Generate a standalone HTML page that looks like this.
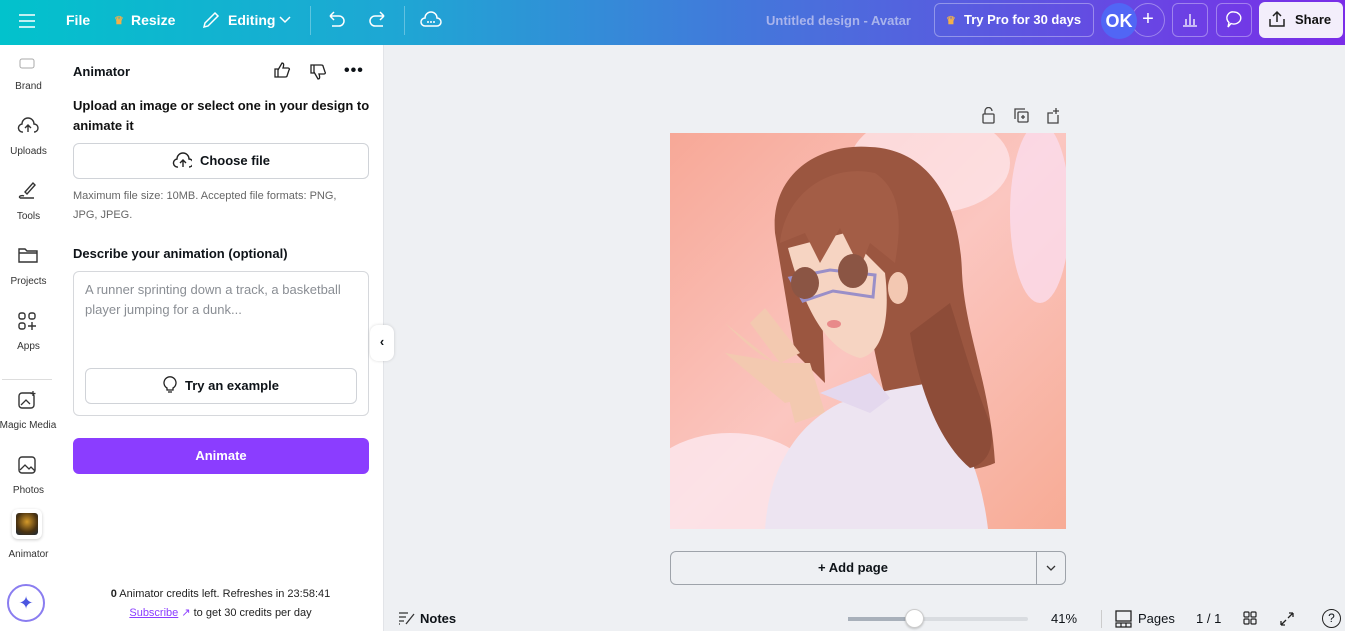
<!DOCTYPE html>
<html><head><meta charset="utf-8"><style>
*{box-sizing:border-box;margin:0;padding:0}
body{width:1345px;height:631px;overflow:hidden;font-family:"Liberation Sans",sans-serif;background:#eef0f3;position:relative;color:#0e1318}
.top{position:absolute;left:0;top:0;width:1345px;height:45px;background:linear-gradient(90deg,#02c2cc 0%,#1fa6d4 30%,#4a6fdc 60%,#7a2de8 100%)}
.t{position:absolute;color:#fff;font-weight:bold;font-size:14px;top:12px}
.abs{position:absolute}
.side{position:absolute;left:0;top:45px;width:57px;height:586px;background:#fff}
.sl{position:absolute;width:57px;text-align:center;font-size:10px;color:#333}
.panel{position:absolute;left:57px;top:45px;width:327px;height:586px;background:#fff;border-right:1px solid #e2e4e8}
.btn{position:absolute;border:1px solid #d0d3d8;border-radius:6px;background:#fff;font-weight:bold;font-size:13px;text-align:center}
</style></head><body>
<div class="top">
 <svg class="abs" style="left:18px;top:13px" width="18" height="16"><path d="M1 2h16M1 8h16M1 14h16" stroke="#fff" stroke-width="1.6"/></svg>
 <div class="t" style="left:66px">File</div>
 <div class="t" style="left:114px;color:#f3b04a;font-size:11px;top:14px">♛</div>
 <div class="t" style="left:131px">Resize</div>
 <svg class="abs" style="left:202px;top:11px" width="18" height="18"><path d="M2 16l1-4L13 2l3 3L6 15z" fill="none" stroke="#fff" stroke-width="1.5"/></svg>
 <div class="t" style="left:228px">Editing</div>
 <svg class="abs" style="left:279px;top:16px" width="12" height="8"><path d="M1 1l5 5 5-5" fill="none" stroke="#fff" stroke-width="1.5"/></svg>
 <div class="abs" style="left:310px;top:6px;width:1px;height:29px;background:rgba(255,255,255,.3)"></div>
 <svg class="abs" style="left:326px;top:11px" width="20" height="18"><path d="M4 5h9a5 5 0 0 1 0 10H6M4 5l4-4M4 5l4 4" fill="none" stroke="#fff" stroke-width="1.5"/></svg>
 <svg class="abs" style="left:368px;top:11px" width="20" height="18"><path d="M16 5H7a5 5 0 0 0 0 10h8M16 5l-4-4M16 5l-4 4" fill="none" stroke="#fff" stroke-width="1.5"/></svg>
 <div class="abs" style="left:404px;top:6px;width:1px;height:29px;background:rgba(255,255,255,.3)"></div>
 <svg class="abs" style="left:420px;top:9px" width="22" height="20"><path d="M5 17a4 4 0 0 1 0-8 6 6 0 0 1 12 0 4 4 0 0 1 0 8z" fill="none" stroke="#fff" stroke-width="1.5"/><circle cx="8" cy="13" r="1" fill="#fff"/><circle cx="11" cy="13" r="1" fill="#fff"/><circle cx="14" cy="13" r="1" fill="#fff"/></svg>
 <div class="t" style="left:766px;color:#a9b4ec;font-weight:bold;top:13px;font-size:13px">Untitled design - Avatar</div>
 <div class="abs" style="left:934px;top:3px;width:160px;height:34px;border:1px solid rgba(255,255,255,.35);border-radius:6px"></div>
 <div class="t" style="left:946px;color:#f3b04a;font-size:11px;top:14px">♛</div>
 <div class="t" style="left:964px;font-size:13px">Try Pro for 30 days</div>
 <div class="abs" style="left:1131px;top:3px;width:34px;height:34px;border:1px solid rgba(255,255,255,.35);border-radius:50%;color:#fff;font-size:20px;text-align:center;line-height:30px">+</div>
 <div class="abs" style="left:1101px;top:3px;width:36px;height:36px;background:#5166f5;border-radius:50%;color:#fff;font-size:18px;font-weight:bold;text-align:center;line-height:36px">OK</div>
 <div class="abs" style="left:1172px;top:3px;width:36px;height:34px;border:1px solid rgba(255,255,255,.35);border-radius:6px"></div>
 <svg class="abs" style="left:1182px;top:11px" width="16" height="16"><path d="M1 15h14M4 14V8M8 14V3M12 14V8" stroke="#fff" stroke-width="1.3"/></svg>
 <div class="abs" style="left:1216px;top:3px;width:36px;height:34px;border:1px solid rgba(255,255,255,.35);border-radius:6px"></div>
 <svg class="abs" style="left:1224px;top:10px" width="20" height="20"><path d="M10 2a7 6 0 1 1-3 11.5L4 17l1-4.5A6 6 0 0 1 10 2z" fill="none" stroke="#fff" stroke-width="1.4"/></svg>
 <div class="abs" style="left:1259px;top:2px;width:84px;height:36px;background:#f3eefb;border-radius:6px"></div>
 <svg class="abs" style="left:1268px;top:10px" width="18" height="18"><path d="M9 12V2M5 6l4-4 4 4M2 9v7h14V9" fill="none" stroke="#222" stroke-width="1.5"/></svg>
 <div class="abs" style="left:1295px;top:12px;font-weight:bold;font-size:13px;color:#111">Share</div>
</div>
<div class="side">
 <svg class="abs" style="left:19px;top:12px" width="16" height="12"><rect x="1" y="2" width="14" height="9" rx="2" fill="none" stroke="#aaa"/></svg>
 <div class="sl" style="top:36px">Brand</div>
 <svg class="abs" style="left:17px;top:71px" width="22" height="18"><path d="M6 16a4 4 0 0 1-1-8 6 6 0 0 1 12 0 4 4 0 0 1 0 8M11 16V9M8 12l3-3 3 3" fill="none" stroke="#333" stroke-width="1.4"/></svg>
 <div class="sl" style="top:101px">Uploads</div>
 <svg class="abs" style="left:17px;top:135px" width="22" height="20"><path d="M8 12l8-9 2 2-8 9zM3 18h14M3 18c-2-2 2-3 4-2" fill="none" stroke="#333" stroke-width="1.4"/></svg>
 <div class="sl" style="top:166px">Tools</div>
 <svg class="abs" style="left:18px;top:202px" width="20" height="16"><path d="M1 2h6l2 2h10v11H1z M1 6h18" fill="none" stroke="#333" stroke-width="1.4"/></svg>
 <div class="sl" style="top:231px">Projects</div>
 <svg class="abs" style="left:18px;top:267px" width="20" height="20"><rect x="1" y="1" width="6" height="6" rx="2" fill="none" stroke="#333" stroke-width="1.4"/><rect x="11" y="1" width="6" height="6" rx="2" fill="none" stroke="#333" stroke-width="1.4"/><rect x="1" y="11" width="6" height="6" rx="2" fill="none" stroke="#333" stroke-width="1.4"/><path d="M14 10v8M10 14h8" stroke="#333" stroke-width="1.4"/></svg>
 <div class="sl" style="top:296px">Apps</div>
 <div class="abs" style="left:2px;top:334px;width:50px;height:1px;background:#ddd"></div>
 <svg class="abs" style="left:18px;top:345px" width="20" height="20"><rect x="1" y="3" width="15" height="15" rx="3" fill="none" stroke="#333" stroke-width="1.4"/><path d="M3 15l5-5 4 4M15 1v5M12.5 3.5h5" stroke="#333" stroke-width="1.3" fill="none"/></svg>
 <div class="sl" style="top:375px;width:60px;left:-2px">Magic Media</div>
 <svg class="abs" style="left:18px;top:411px" width="20" height="20"><rect x="1" y="1" width="16" height="16" rx="3" fill="none" stroke="#333" stroke-width="1.4"/><path d="M2 14l5-5 4 4 2-2 4 4" stroke="#333" stroke-width="1.3" fill="none"/></svg>
 <div class="sl" style="top:440px">Photos</div>
 <div class="abs" style="left:12px;top:464px;width:30px;height:30px;border-radius:6px;background:#fff;box-shadow:0 1px 3px rgba(0,0,0,.2)"><div style="margin:4px;width:22px;height:22px;border-radius:3px;background:radial-gradient(circle at 50% 40%,#d59a2a,#4a3210 60%,#1c2a3a)"></div></div>
 <div class="sl" style="top:504px">Animator</div>
 <div class="abs" style="left:7px;top:539px;width:38px;height:38px;border-radius:50%;border:2px solid #8a7df0;background:#fff;text-align:center;line-height:34px;color:#4b56e0;font-size:18px">✦</div>
</div>
<div class="panel">
 <div class="abs" style="left:16px;top:19px;font-weight:bold;font-size:13px">Animator</div>
 <svg class="abs" style="left:216px;top:16px" width="18" height="18"><path d="M2 8h3v8H2zM5 9l4-7c2 0 2 2 1 5h5c1 0 2 1 1 2l-2 6c0 1-1 1-2 1H5" fill="none" stroke="#222" stroke-width="1.3"/></svg>
 <svg class="abs" style="left:252px;top:19px" width="18" height="18"><path d="M2 1h3v8H2zM5 8l4 7c2 0 2-2 1-5h5c1 0 2-1 1-2l-2-6c0-1-1-1-2-1H5" fill="none" stroke="#222" stroke-width="1.3"/></svg>
 <div class="abs" style="left:287px;top:17px;font-size:16px;font-weight:bold;letter-spacing:1px">•••</div>
 <div class="abs" style="left:16px;top:51px;font-size:13px;font-weight:bold;line-height:20px;width:300px;color:#111">Upload an image or select one in your design to animate it</div>
 <div class="btn" style="left:16px;top:98px;width:296px;height:36px;line-height:34px"><svg style="vertical-align:-4px;margin-right:8px" width="20" height="18"><path d="M6 16a4 4 0 0 1-1-8 6 6 0 0 1 12 0 4 4 0 0 1 0 8M11 16V9M8 12l3-3 3 3" fill="none" stroke="#222" stroke-width="1.4"/></svg>Choose file</div>
 <div class="abs" style="left:16px;top:142px;font-size:11px;line-height:19px;color:#666;width:290px">Maximum file size: 10MB. Accepted file formats: PNG, JPG, JPEG.</div>
 <div class="abs" style="left:16px;top:201px;font-size:13px;font-weight:bold">Describe your animation (optional)</div>
 <div class="abs" style="left:16px;top:226px;width:296px;height:145px;border:1px solid #d6d8dc;border-radius:6px"></div>
 <div class="abs" style="left:28px;top:235px;font-size:13px;line-height:20px;color:#8a8e94;width:280px">A runner sprinting down a track, a basketball player jumping for a dunk...</div>
 <div class="btn" style="left:28px;top:323px;width:272px;height:36px;line-height:34px;font-size:13px"><svg style="vertical-align:-4px;margin-right:8px" width="14" height="18"><path d="M4 12a6 6 0 1 1 6 0v2H4zM5 16h4" fill="none" stroke="#222" stroke-width="1.3"/></svg>Try an example</div>
 <div class="abs" style="left:16px;top:393px;width:296px;height:36px;border-radius:6px;background:#8b3dff;color:#fff;font-weight:bold;font-size:13px;text-align:center;line-height:36px">Animate</div>
 <div class="abs" style="left:0;top:543px;width:327px;text-align:center;font-size:11px;color:#222"><b>0</b> Animator credits left. Refreshes in 23:58:41</div>
 <div class="abs" style="left:0;top:561px;width:327px;text-align:center;font-size:11px;color:#222"><span style="color:#8b3dff;text-decoration:underline">Subscribe</span> <span style="color:#8b3dff">↗</span> to get 30 credits per day</div>
</div>
<div class="abs" style="left:370px;top:325px;width:24px;height:36px;background:#fff;border-radius:8px;box-shadow:0 0 3px rgba(0,0,0,.15);text-align:center;line-height:34px;font-size:13px;font-weight:bold">‹</div>
<svg class="abs" style="left:981px;top:107px" width="82" height="18"><g fill="none" stroke="#444" stroke-width="1.3"><rect x="2" y="7" width="11" height="9" rx="1"/><path d="M4 7V4a3.5 3.5 0 0 1 7 0"/><rect x="37" y="5" width="10" height="10" rx="1"/><path d="M34 12V2h10M42 8v4M40 10h4"/><path d="M77 8v8H67V6h5M75 1v6M72 4h6"/></g></svg>
<svg class="abs" style="left:670px;top:133px" width="396" height="396" viewBox="0 0 396 396">
 <defs><linearGradient id="bg" x1="0" y1="0" x2="1" y2="1"><stop offset="0" stop-color="#f7a897"/><stop offset=".5" stop-color="#fbc6c0"/><stop offset="1" stop-color="#f7ab95"/></linearGradient>
 <radialGradient id="wh" cx=".3" cy=".25" r=".4"><stop offset="0" stop-color="#fff3f6" stop-opacity=".9"/><stop offset="1" stop-color="#fff" stop-opacity="0"/></radialGradient></defs>
 <rect width="396" height="396" fill="url(#bg)"/>
 <ellipse cx="260" cy="30" rx="80" ry="50" fill="#fde8ee" opacity=".7"/>
 <ellipse cx="60" cy="360" rx="90" ry="60" fill="#fde8f0" opacity=".8"/>
 <ellipse cx="370" cy="80" rx="30" ry="90" fill="#fbdcec" opacity=".8"/>
 <path d="M105 100C100 40 150 10 200 14 260 16 290 70 292 140 295 200 320 250 325 330 290 345 250 335 230 320 210 250 200 200 195 160L150 130 155 250 125 220z" fill="#9b5640"/>
 <path d="M118 115C130 160 150 215 190 225 215 220 220 180 215 140L175 100z" fill="#f6d4c2"/>
 <path d="M110 110C115 60 160 30 205 40 235 60 230 100 225 130L200 110 190 135 170 95 150 130 135 100z" fill="#a35d46"/>
 <ellipse cx="228" cy="155" rx="10" ry="16" fill="#f3c8b2"/>
 <path d="M120 145l40 -8 45 5-2 22-40-6-30 10z" fill="none" stroke="#9a8fc8" stroke-width="3"/>
 <ellipse cx="135" cy="150" rx="14" ry="16" fill="#8b5544"/><ellipse cx="183" cy="138" rx="15" ry="17" fill="#8b5544"/>
 <ellipse cx="164" cy="191" rx="7" ry="4" fill="#e88a8a"/>
 <path d="M60 195c10 10 25 25 45 35l-50 -40zM80 190l30 40 20-10-35-45zM55 220l60 10 20 35-20 5z" fill="#f3c9b0"/>
 <path d="M110 230l30 0 15 50-30 10z" fill="#f3c9b0"/>
 <path d="M95 396C100 330 130 290 170 270 200 260 230 255 260 250 290 300 310 330 318 396z" fill="#ede4f1"/>
 <path d="M150 260l50 -20 20 25 -20 15z" fill="#e4d8ee"/>
 <path d="M240 200C250 260 270 310 300 335 320 330 325 310 320 290 300 240 290 200 280 170z" fill="#8d4c38"/>
</svg>
<div class="abs" style="left:670px;top:551px;width:396px;height:34px;border:1px solid #9ea3aa;border-radius:6px;background:#eef0f3"></div>
<div class="abs" style="left:1036px;top:551px;width:1px;height:34px;background:#9ea3aa"></div>
<div class="abs" style="left:670px;top:560px;width:366px;text-align:center;font-weight:bold;font-size:13px">+ Add page</div>
<svg class="abs" style="left:1046px;top:565px" width="10" height="6"><path d="M1 1l4 4 4-4" fill="none" stroke="#333" stroke-width="1.3"/></svg>
<svg class="abs" style="left:398px;top:611px" width="18" height="14"><path d="M1 2h9M1 6h7M1 10h5M8 13l8-10M1 13h1" stroke="#333" stroke-width="1.3"/></svg>
<div class="abs" style="left:420px;top:611px;font-size:13px;font-weight:bold">Notes</div>
<div class="abs" style="left:848px;top:617px;width:180px;height:4px;background:#d9dce0;border-radius:2px"><div style="width:66px;height:4px;background:#a8b0ba"></div></div>
<div class="abs" style="left:905px;top:609px;width:19px;height:19px;border-radius:50%;background:#fff;border:1px solid #ccc;box-shadow:0 1px 2px rgba(0,0,0,.2)"></div>
<div class="abs" style="left:1051px;top:611px;font-size:13px">41%</div>
<div class="abs" style="left:1101px;top:610px;width:1px;height:18px;background:#ccc"></div>
<svg class="abs" style="left:1115px;top:610px" width="18" height="18"><rect x="1" y="1" width="15" height="10" fill="none" stroke="#222" stroke-width="1.3"/><path d="M1 13h15v4H1zM6 13v4M11 13v4" fill="none" stroke="#222" stroke-width="1.2"/></svg>
<div class="abs" style="left:1138px;top:611px;font-size:13px">Pages</div>
<div class="abs" style="left:1196px;top:611px;font-size:13px">1 / 1</div>
<svg class="abs" style="left:1243px;top:611px" width="14" height="14"><g fill="none" stroke="#222" stroke-width="1.2"><rect x="1" y="1" width="5" height="5" rx="1"/><rect x="8" y="1" width="5" height="5" rx="1"/><rect x="1" y="8" width="5" height="5" rx="1"/><rect x="8" y="8" width="5" height="5" rx="1"/></g></svg>
<svg class="abs" style="left:1279px;top:611px" width="16" height="16"><path d="M2 14l5-5M2 14v-4M2 14h4M14 2l-5 5M14 2v4M14 2h-4" fill="none" stroke="#222" stroke-width="1.3"/></svg>
<div class="abs" style="left:1322px;top:609px;width:19px;height:19px;border:1.4px solid #222;border-radius:50%;text-align:center;font-size:12px;line-height:17px">?</div>
</body></html>
